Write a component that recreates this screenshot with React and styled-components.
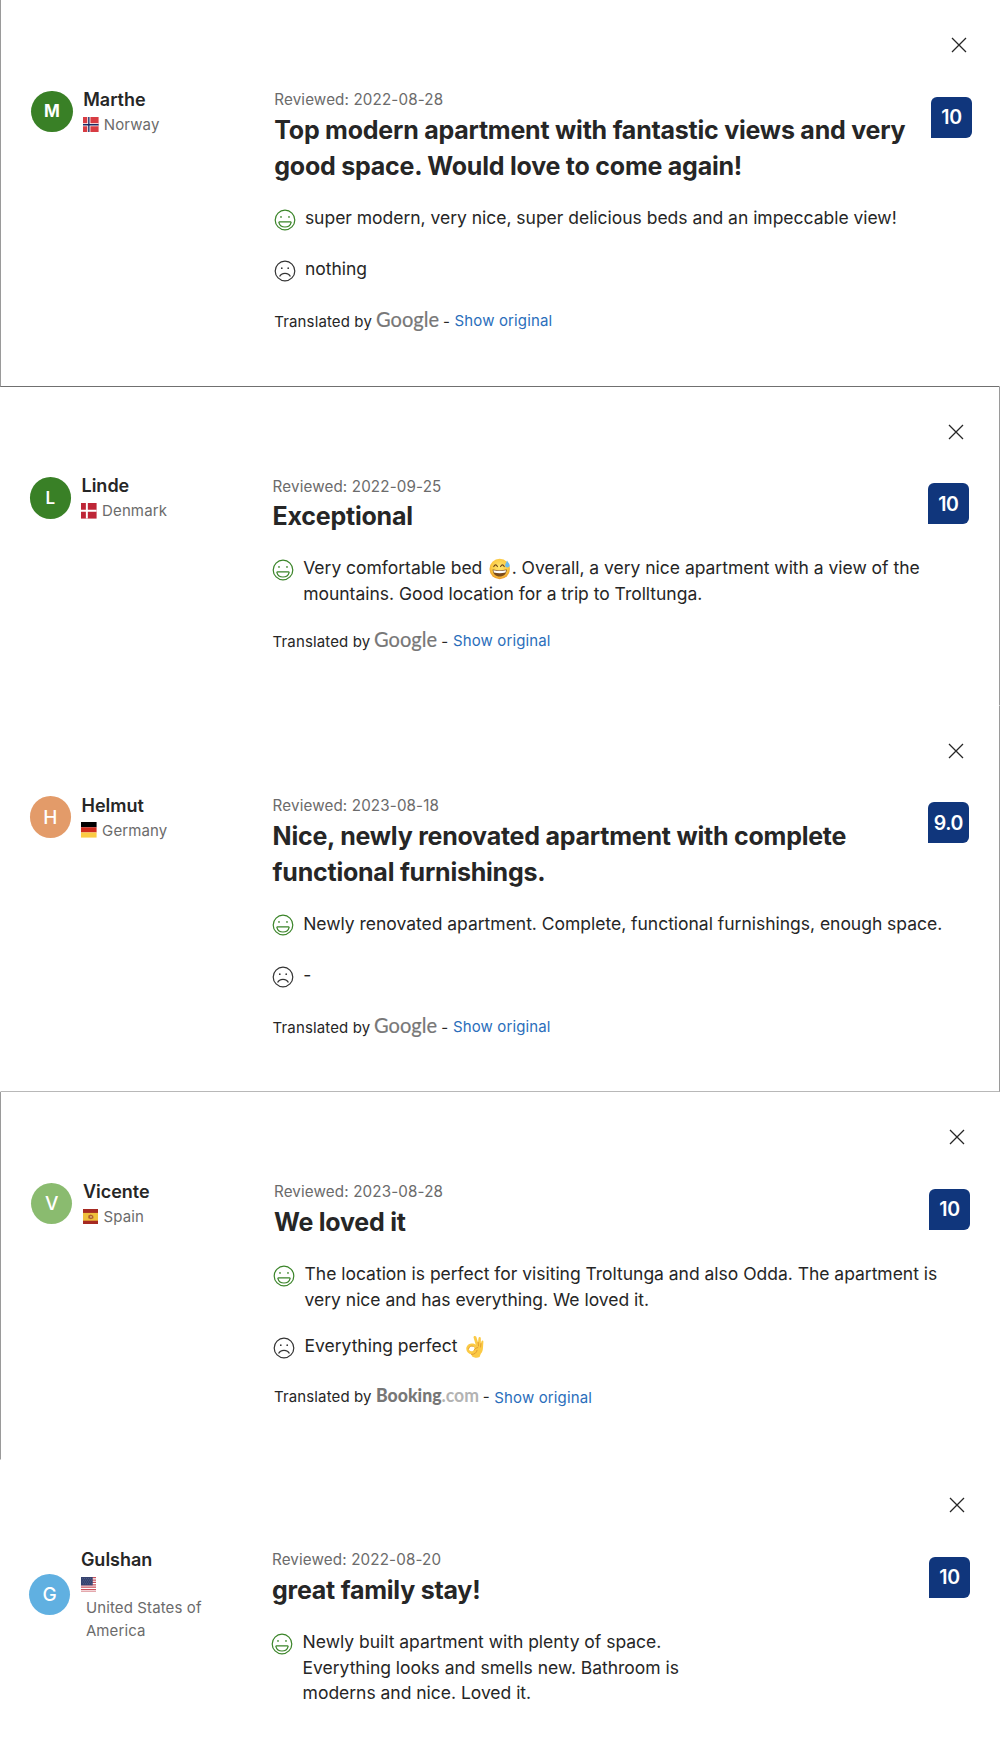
import React from "react";
import styled, { createGlobalStyle } from "styled-components";

const GlobalStyle = createGlobalStyle`
  * {
    box-sizing: border-box;
  }
  body {
    margin: 0;
    background: #fff;
    color: #262626;
    font-family: Inter, "Liberation Sans", sans-serif;
  }
`;

const Page = styled.main`
  width: 1000px;
  overflow: hidden;
`;

const Card = styled.article`
  height: ${(props) => props.$height}px;
  padding: 37px ${(props) => props.$right}px 0 ${(props) => props.$left - 1}px;
  border-left: 1px solid ${(props) => (props.$edge === "left" ? "#9a9a9a" : "transparent")};
  border-right: 1px solid ${(props) => (props.$edge === "right" ? "#9a9a9a" : "transparent")};
  border-bottom: 1px solid ${(props) => props.$line || "transparent"};
`;

const TopBar = styled.div`
  display: flex;
  justify-content: flex-end;
  height: 49.9px;
  padding-right: 5px;
`;

const CloseButton = styled.button`
  width: 16px;
  height: 16px;
  padding: 0;
  border: none;
  background: none;
  cursor: pointer;
  svg {
    display: block;
  }
`;

const Body = styled.div`
  display: grid;
  grid-template-columns: 243px 1fr;
  align-items: start;
`;

const Guest = styled.div`
  display: flex;
  align-items: center;
  gap: 10.5px;
`;

const Avatar = styled.div`
  display: flex;
  align-items: center;
  justify-content: center;
  width: 41.4px;
  height: 41.4px;
  border-radius: 50%;
  background: ${(props) => props.$color};
  color: #fff;
  font-size: ${(props) => (props.$weight > 500 ? 17 : 19)}px;
  font-weight: ${(props) => props.$weight};
`;

const GuestName = styled.div`
  font-size: 18px;
  font-weight: 600;
  line-height: 25.4px;
`;

const Country = styled.div`
  display: flex;
  flex-direction: ${(props) => (props.$stacked ? "column" : "row")};
  align-items: ${(props) => (props.$stacked ? "flex-start" : "center")};
  gap: ${(props) => (props.$stacked ? 0 : 5)}px;
  padding-top: 0.6px;
  color: #6b6b6b;
  font-size: 15px;
  line-height: 23px;
`;

const FlagBox = styled.span`
  display: flex;
  align-items: center;
  height: 23px;
`;

const CountryName = styled.span`
  padding-left: ${(props) => (props.$stacked ? 5 : 0)}px;
  letter-spacing: 0.12px;
  white-space: pre-line;
`;

const ReviewHead = styled.div`
  display: flex;
  justify-content: space-between;
  align-items: flex-start;
  padding-top: 3.5px;
`;

const ReviewDate = styled.div`
  color: #6b6b6b;
  font-size: 15.2px;
  line-height: 20px;
  letter-spacing: 0.13px;
`;

const Title = styled.h3`
  margin: 1.5px 0 0;
  font-size: 25px;
  font-weight: 700;
  line-height: 36px;
  letter-spacing: -0.23px;
  white-space: pre;
`;

const Score = styled.div`
  display: flex;
  align-items: center;
  justify-content: center;
  flex-shrink: 0;
  width: 41px;
  height: 41px;
  margin-top: 6.3px;
  border-radius: 6px 6px 6px 0;
  background: #10367c;
  color: #fff;
  font-size: 19.5px;
  font-weight: 600;
  letter-spacing: -0.4px;
`;

const Feedback = styled.div`
  display: flex;
  flex-direction: column;
  gap: 20.6px;
  margin-top: 21px;
`;

const Comment = styled.div`
  display: flex;
  gap: 9.4px;
  min-height: 30.8px;
  > svg {
    flex-shrink: 0;
    margin-top: 3.8px;
    margin-left: -0.8px;
  }
`;

const CommentText = styled.div`
  font-size: 17.5px;
  line-height: 25.7px;
  letter-spacing: -0.02px;
`;

const Line = styled.p`
  height: 25.7px;
  margin: 0;
  white-space: pre;
`;

const Emoji = styled.svg`
  display: inline-block;
  margin: -5px 1px -3px 1.5px;
  vertical-align: middle;
`;

const Translation = styled.div`
  display: flex;
  align-items: baseline;
  padding-top: ${(props) => (props.$provider === "google" ? 1.4 : 0)}px;
  font-size: 15px;
  line-height: 26px;
  letter-spacing: 0.13px;
  white-space: pre;
`;

const Provider = styled.svg`
  overflow: visible;
  letter-spacing: 0;
  margin: 0 4px ${(props) => props.$drop || 0}px;
`;

const ShowOriginal = styled.a`
  position: relative;
  top: ${(props) => (props.$provider === "google" ? -1 : 1)}px;
  margin-left: 4.6px;
  color: #2a6ebb;
  cursor: pointer;
`;

const CloseIcon = () => (
  <svg width="16" height="16" viewBox="0 0 16 16">
    <path d="M1 1L15 15M15 1L1 15" stroke="#262626" strokeWidth="1.3" />
  </svg>
);

const HappyIcon = () => (
  <svg width="22" height="22" viewBox="-11 -11 22 22" fill="none" stroke="#3a8428" strokeWidth="1.2">
    <circle r="9.8" />
    <circle cx="-4" cy="-3.1" r="0.85" fill="#3a8428" stroke="none" />
    <circle cx="4" cy="-3.1" r="0.85" fill="#3a8428" stroke="none" />
    <path d="M-5.6 1.9H5.6Q6.2 1.9 6.1 2.6C5.3 5.6 2.9 7 0 7S-5.3 5.6-6.1 2.6Q-6.2 1.9-5.6 1.9Z" />
  </svg>
);

const SadIcon = () => (
  <svg width="22" height="22" viewBox="-11 -11 22 22" fill="none" stroke="#333" strokeWidth="1.2">
    <circle r="9.8" />
    <circle cx="-3.2" cy="-2.8" r="0.85" fill="#333" stroke="none" />
    <circle cx="3.2" cy="-2.8" r="0.85" fill="#333" stroke="none" />
    <path d="M-5.4 5.6C-3.6 1.2 3.6 1.2 5.4 5.6" />
  </svg>
);

const SweatSmile = () => (
  <Emoji width="22" height="22" viewBox="0 0 22 22">
    <defs>
      <radialGradient id="face" cx="50%" cy="40%" r="60%">
        <stop offset="0" stopColor="#ffe873" />
        <stop offset="0.7" stopColor="#fbc840" />
        <stop offset="1" stopColor="#e9962b" />
      </radialGradient>
    </defs>
    <circle cx="10.7" cy="11" r="10.2" fill="url(#face)" />
    <path d="M4.8 8.6Q6.6 5.2 8.4 8.6M11.6 8.6Q13.4 5.2 15.2 8.6" fill="none" stroke="#6b4218" strokeWidth="1.1" strokeLinecap="round" />
    <path d="M3.6 11.6Q10.7 13 17.8 11.6C17.6 16.2 14.6 18.6 10.7 18.6S3.8 16.2 3.6 11.6Z" fill="#7b4a1b" />
    <path d="M4.3 12.2Q10.7 13.5 17.1 12.2L16.5 14.6Q10.7 15.8 4.9 14.6Z" fill="#fff" />
    <path d="M18 2.4C19.6 4.8 21 6.4 20.6 8.1C20 10 16.8 9.9 16.2 8C15.8 6.4 17.2 4.8 18 2.4Z" fill="#6cbcf0" />
  </Emoji>
);

const OkHand = () => (
  <Emoji width="22" height="23" viewBox="0 0 22 23">
    <path
      d="M10.3 1.1C11.6.6 12.3 1.5 12.6 2.7L14 7.2L14.5 3.2C14.7 1.7 16.7 1.8 16.8 3.3L16.9 8.5L17.5 6.2C18 4.9 19.5 5.3 19.4 6.7L19 12.5C18.9 15 18.4 17.2 16.8 18.8L15.6 22C13.2 23.2 9.9 22.8 8 21.2L7.4 19.5C4.6 18.6 2.4 16.8 2.3 14C2.2 11.4 4.4 8.9 7.2 8.6C9 8.4 10.8 9 11.7 9.7L9.7 3C9.4 2.1 9.5 1.4 10.3 1.1Z"
      fill="#fbca45"
    />
    <path d="M4.8 13.8C5.2 11.7 7.2 10.8 9 11.4C10.6 12 10.8 13.4 10 15C8.6 16.9 5 16.6 4.8 13.8Z" fill="#fff" />
    <path d="M4.6 13.8C5 11.5 7.2 10.5 9.2 11.3M14.2 7.5L14.5 11M16.9 8.6L16.6 12M7.4 19.4C10.5 19.6 12.6 17.8 13.1 15.3M10.1 15C11 13.6 12.4 12.6 13.8 12.6" fill="none" stroke="#dc9230" strokeWidth="0.8" strokeLinecap="round" />
  </Emoji>
);

const Flag = ({ code }) => (
  <svg width="15.6" height="15.6" viewBox="0 0 16 16">
    {code === "no" && (
      <>
        <path fill="#d83c43" d="M0 0H16V16H0Z" />
        <path stroke="#fff" strokeWidth="3.2" d="M6 0V16M0 8H16" />
        <path stroke="#1b2a63" strokeWidth="1.4" d="M6 0V16M0 8H16" />
      </>
    )}
    {code === "dk" && (
      <>
        <path fill="#be2637" d="M0 0H16V16H0Z" />
        <path stroke="#fff" strokeWidth="2" d="M6 0V16M0 8H16" />
      </>
    )}
    {code === "de" && (
      <>
        <path fill="#000" d="M0 0H16V5.4H0Z" />
        <path fill="#cf2b1d" d="M0 5.4H16V10.7H0Z" />
        <path fill="#fbcb43" d="M0 10.7H16V16H0Z" />
      </>
    )}
    {code === "es" && (
      <>
        <path fill="#a62a22" d="M0 0H16V16H0Z" />
        <path fill="#efc03b" d="M0 4H16V12H0Z" />
        <path fill="#b0602c" d="M5.5 6.6L8 5.6L10.5 6.8L10.8 9.6L8 10.6L5.4 9.6Z" />
        <path fill="#dcb27c" d="M7.4 7.3H9V9H7.4Z" />
      </>
    )}
    {code === "us" && (
      <>
        <path fill="#fff" d="M0 0H16V16H0Z" />
        <path stroke="#c9525c" strokeWidth="1.25" d="M0 .6H16M0 3.1H16M0 5.5H16M0 8H16M0 10.5H16M0 12.9H16M0 15.4H16" />
        <path fill="#35426f" d="M0 0H12V8.6H0Z" />
        <path stroke="#7781a3" strokeWidth="0.6" strokeDasharray="0.7 1.4" d="M1 1.5H11.5M2 3.3H11.5M1 5.1H11.5M2 6.9H11.5" />
      </>
    )}
  </svg>
);

const GoogleLogo = () => (
  <Provider width="63" height="17" $drop={-2}>
    <text x="0" y="17" fill="#777" stroke="#777" strokeWidth="0.2" fontFamily="Lato, sans-serif" fontSize="21" textLength="63" lengthAdjust="spacingAndGlyphs">
      Google
    </text>
  </Provider>
);

const BookingLogo = () => (
  <Provider width="103" height="14" $drop={-0.6}>
    <text x="0" y="14" fill="#777" fontFamily="Lato, sans-serif" fontWeight="900" fontSize="18" textLength="103" lengthAdjust="spacingAndGlyphs">
      Booking
      <tspan fill="#b3b3b3" fontWeight="700">.com</tspan>
    </text>
  </Provider>
);

const reviews = [
  {
    name: "Marthe",
    country: "Norway",
    code: "no",
    color: "#398026",
    weight: 700,
    date: "2022-08-28",
    title: "Top modern apartment with fantastic views and very\ngood space. Would love to come again!",
    score: "10",
    good: ["super modern, very nice, super delicious beds and an impeccable view!"],
    bad: ["nothing"],
    provider: "google",
    box: { $height: 386.6, $left: 31.3, $right: 27, $edge: "left", $line: "#707070" },
  },
  {
    name: "Linde",
    country: "Denmark",
    code: "dk",
    color: "#398026",
    weight: 600,
    date: "2022-09-25",
    title: "Exceptional",
    score: "10",
    good: [
      <>
        Very comfortable bed <SweatSmile />. Overall, a very nice apartment with a view of the
      </>,
      "mountains. Good location for a trip to Trolltunga.",
    ],
    provider: "google",
    box: { $height: 319.2, $left: 29.6, $right: 30.2, $edge: "right" },
  },
  {
    name: "Helmut",
    country: "Germany",
    code: "de",
    color: "#e39b69",
    weight: 500,
    date: "2023-08-18",
    title: "Nice, newly renovated apartment with complete\nfunctional furnishings.",
    score: "9.0",
    good: ["Newly renovated apartment. Complete, functional furnishings, enough space."],
    bad: ["-"],
    provider: "google",
    box: { $height: 386.2, $left: 29.6, $right: 30.2, $edge: "right", $line: "#b8b8b8" },
  },
  {
    name: "Vicente",
    country: "Spain",
    code: "es",
    color: "#8abb6f",
    weight: 500,
    date: "2023-08-28",
    title: "We loved it",
    score: "10",
    good: [
      "The location is perfect for visiting Troltunga and also Odda. The apartment is",
      "very nice and has everything. We loved it.",
    ],
    bad: [
      <>
        Everything perfect <OkHand />
      </>,
    ],
    provider: "booking",
    box: { $height: 368, $left: 31, $right: 29, $edge: "left" },
  },
  {
    name: "Gulshan",
    country: "United States of\nAmerica",
    code: "us",
    stacked: true,
    color: "#60b0e1",
    weight: 500,
    date: "2022-08-20",
    title: "great family stay!",
    score: "10",
    good: [
      "Newly built apartment with plenty of space.",
      "Everything looks and smells new. Bathroom is",
      "moderns and nice. Loved it.",
    ],
    box: { $height: 297, $left: 29, $right: 29 },
  },
];

const Lines = ({ lines }) => (
  <CommentText>
    {lines.map((line, i) => (
      <Line key={i}>{line}</Line>
    ))}
  </CommentText>
);

const Review = ({ review }) => (
  <Card {...review.box}>
    <TopBar>
      <CloseButton aria-label="Close">
        <CloseIcon />
      </CloseButton>
    </TopBar>
    <Body>
      <Guest>
        <Avatar $color={review.color} $weight={review.weight}>
          {review.name[0]}
        </Avatar>
        <div>
          <GuestName>{review.name}</GuestName>
          <Country $stacked={review.stacked}>
            <FlagBox>
              <Flag code={review.code} />
            </FlagBox>
            <CountryName $stacked={review.stacked}>{review.country}</CountryName>
          </Country>
        </div>
      </Guest>
      <div>
        <ReviewHead>
          <div>
            <ReviewDate>Reviewed: {review.date}</ReviewDate>
            <Title>{review.title}</Title>
          </div>
          <Score>{review.score}</Score>
        </ReviewHead>
        <Feedback>
          <Comment>
            <HappyIcon />
            <Lines lines={review.good} />
          </Comment>
          {review.bad && (
            <Comment>
              <SadIcon />
              <Lines lines={review.bad} />
            </Comment>
          )}
          {review.provider && (
            <Translation $provider={review.provider}>
              Translated by
              {review.provider === "google" ? <GoogleLogo /> : <BookingLogo />}
              -
              <ShowOriginal $provider={review.provider}>Show original</ShowOriginal>
            </Translation>
          )}
        </Feedback>
      </div>
    </Body>
  </Card>
);

const App = () => {
  return (
    <>
      <GlobalStyle />
      <Page>
        {reviews.map((review) => (
          <Review key={review.name} review={review} />
        ))}
      </Page>
    </>
  );
};

export default App;
